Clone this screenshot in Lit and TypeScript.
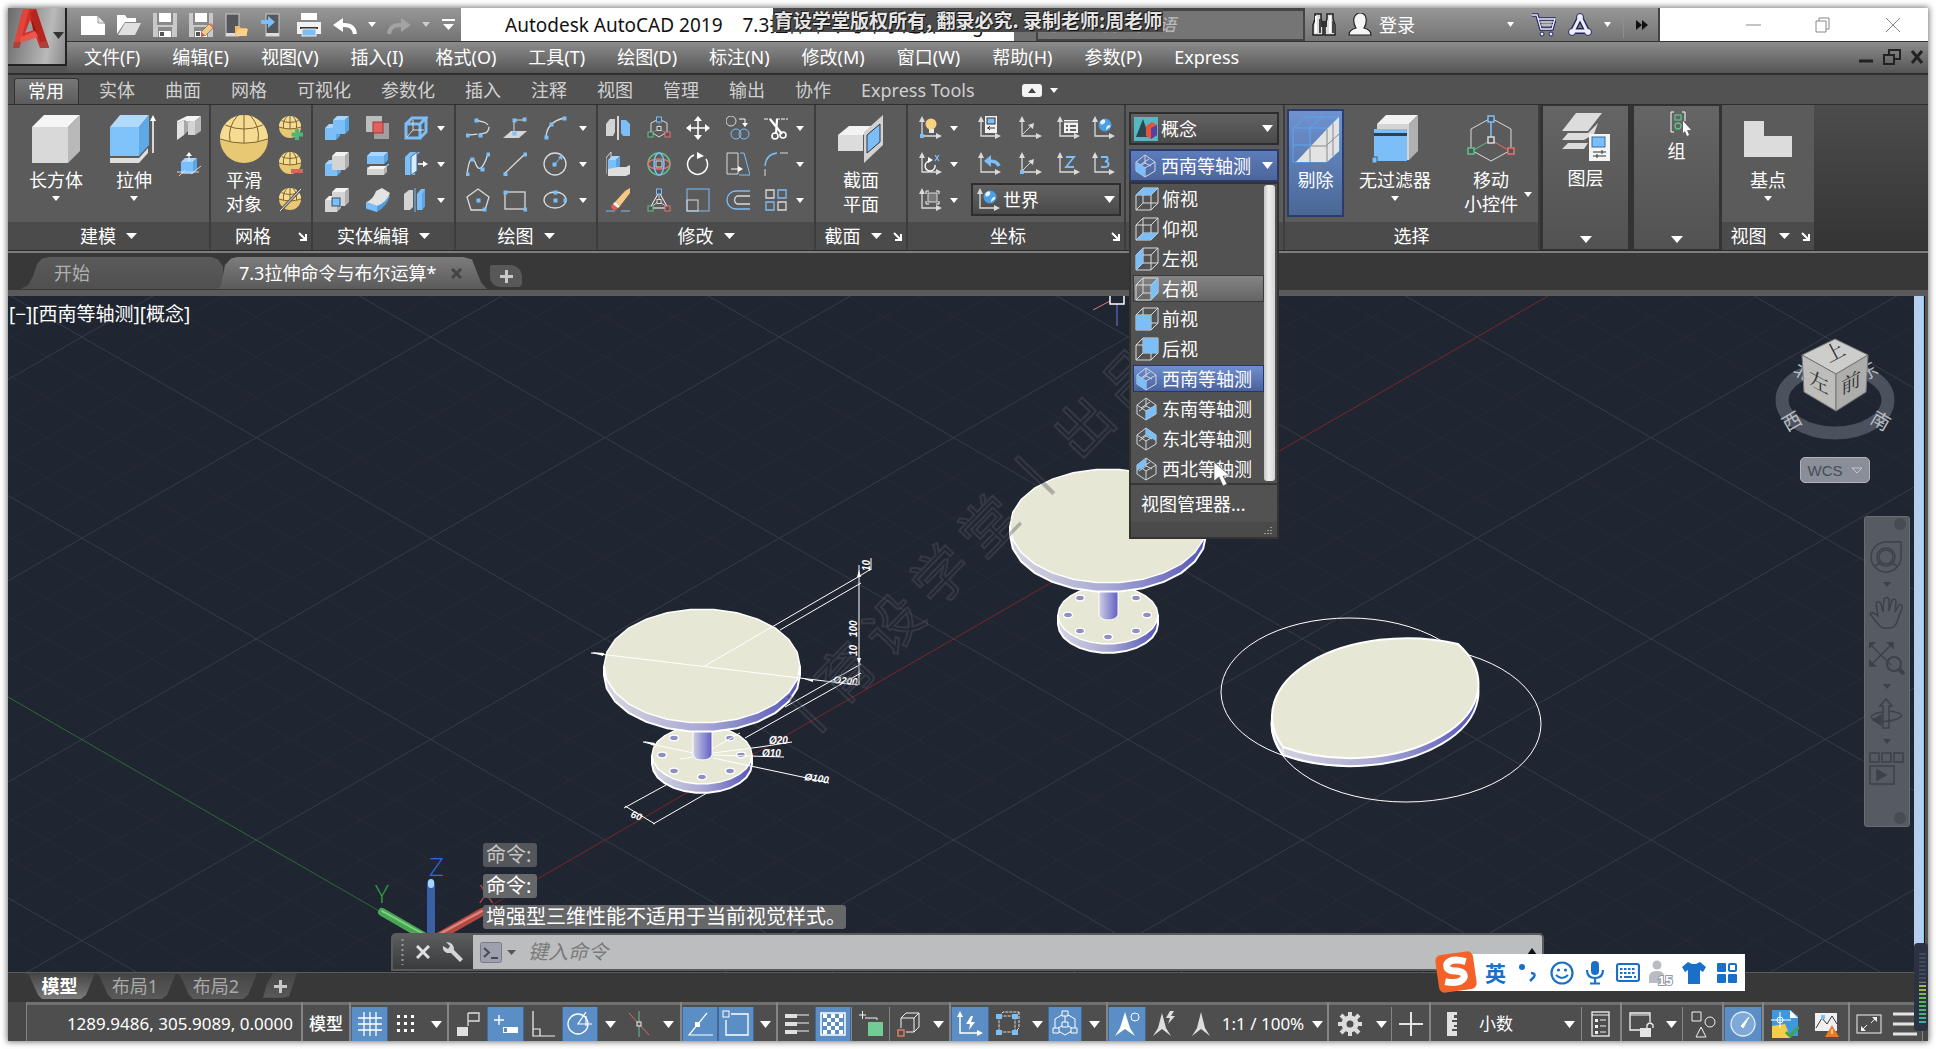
import { LitElement, html, svg, css, nothing, TemplateResult, SVGTemplateResult } from "lit";
import { customElement } from "lit/decorators.js";
import { classMap } from "lit/directives/class-map.js";

const B = "#7cbff8";
const G = "#dadada";

const draw = (w: number, h: number, body: unknown, vb = `0 0 ${w} ${h}`) =>
  html`<svg width=${w} height=${h} viewBox=${vb} fill="none" aria-hidden="true">${body}</svg>`;
const i24 = (body: SVGTemplateResult) => draw(24, 24, body);
const i48 = (body: SVGTemplateResult) => draw(48, 48, body);
const i28 = (body: SVGTemplateResult) => draw(28, 28, body);
const caret = (w = 8, h = 5) => draw(w, h, svg`<path d=${`M0 0H${w}L${w / 2} ${h}Z`} fill="#fff"/>`);
const launcher = draw(9, 9, svg`<path d="M1 1L7 7M8 2V8H2" stroke="#fff" stroke-width="2"/>`);

/* ---------- shared drawing parts ---------- */
const dot = (x: number, y: number) => svg`<rect x=${x - 1.5} y=${y - 1.5} width="4" height="4" fill=${B}/>`;
const block = (x: number, y: number, w: number, h: number, d: number, f: string, t: string, r: string) => svg`
  <path d=${`M${x} ${y + d}h${w}v${h}h${-w}Z`} fill=${f}/>
  <path d=${`M${x} ${y + d}l${d} ${-d}h${w}l${-d} ${d}Z`} fill=${t}/>
  <path d=${`M${x + w} ${y + d}l${d} ${-d}v${h}l${-d} ${d}Z`} fill=${r}/>`;
const blueBlock = (x: number, y: number, w: number, h: number, d: number) => block(x, y, w, h, d, B, "#a8d6ff", "#5aa5e6");
const greyBlock = (x: number, y: number, w: number, h: number, d: number) => block(x, y, w, h, d, "#d4d4d4", "#f2f2f2", "#b0b0b0");
const egg = (r: number) => svg`
  <ellipse cx=${r} cy=${r} rx=${r} ry=${r} fill="#e8c873"/>
  <path d=${`M0 ${r}A${r} ${r} 0 0 1 ${2 * r} ${r}Q${r} ${r * 1.35} 0 ${r}Z`} fill="#f6dc92"/>
  <path d=${`M0 ${r}Q${r} ${r * 1.35} ${2 * r} ${r}M${r * 0.22} ${r * 0.42}Q${r} ${r * 0.75} ${r * 1.78} ${r * 0.42}M${r} 0V${r * 1.17}M${r * 0.75} 0Q${r * 0.3} ${r * 0.5} ${r * 0.42} ${r * 1.1}M${r * 1.25} 0Q${r * 1.7} ${r * 0.5} ${r * 1.58} ${r * 1.1}`} stroke="#7d6530" stroke-width="1"/>`;
const axes = svg`<path d="M4 5V20H19" stroke=${G} stroke-width="1.3"/><path d="M4 0L7 6H1ZM24 20L18 17V23Z" fill=${G}/>`;
const globe = (x: number, y: number) => svg`<circle cx=${x} cy=${y} r="6.5" fill="#4d9fe4"/><path d=${`M${x - 5} ${y - 3}q3-4 5-2q1 3-2 4q-2 2-3-2M${x + 1} ${y + 5}q0-4 3-5q2 0 1 2z`} fill="#e8f4ff"/>`;
const hex = svg`<path d="M12 3L20 7V16L12 21L4 16V7Z" stroke=${G}/>`;

const small: Record<string, SVGTemplateResult> = {
  polysolid: svg`<path d="M0 7L7 4V19L0 24Z" fill="#e2e2e2"/><path d="M7 4L11 6V15L7 19Z" fill="#a9a9a9"/><path d="M11 6L13 5H18V19H11Z" fill="#d4d4d4"/><path d="M0 7V5L10 0H24L18 5H12L11 6L7 4Z" fill="#f4f4f4"/><path d="M18 5L24 0V15L18 19Z" fill="#b8b8b8"/>`,
  presspull: svg`${blueBlock(4, 6, 12, 12, 4)}<path d="M12 9V2" stroke="#fff"/><path d="M12 0L15 4H9Z" fill="#fff"/><path d="M0 20H22M2 24L8 18M14 22L24 14" stroke=${G}/>`,
  eggplus: svg`${egg(11)}<path d="M18 13V24M12.500 18.500H24" stroke="#4fb878" stroke-width="4"/>`,
  eggminus: svg`${egg(11)}<path d="M12 19H24" stroke="#e0605e" stroke-width="4"/>`,
  eggline: svg`${egg(11)}<path d="M1 23L22 1" stroke="#555" stroke-width="3"/><path d="M1 23L22 1" stroke="#eee"/>`,
  union: svg`${blueBlock(0, 8, 11, 12, 4)}${blueBlock(8, 0, 12, 14, 4)}`,
  intersectRed: svg`<rect x="0" y="0" width="16" height="16" fill="#bdbdbd"/><rect x="8" y="7" width="15" height="16" fill="#a0a0a0"/><rect x="7" y="6" width="10" height="11" fill="#e5605c" stroke="#943a38"/>`,
  wirebox: svg`<path d="M2 8H16V22H2ZM2 8L8 2H22L16 8M22 2V16L16 22" stroke=${B} stroke-width="3"/><path d="M9 4V14L3 21M9 14H20" stroke=${G}/>`,
  subtract: svg`${blueBlock(0, 8, 12, 12, 4)}${greyBlock(7, 0, 13, 14, 4)}`,
  slice: svg`${blueBlock(1, 0, 17, 8, 4)}<path d="M1 16H18L23 12" stroke=${B} stroke-width="1.500"/>${greyBlock(1, 14, 17, 6, 3)}`,
  thicken: svg`<path d="M1 5L6 0H16L11 5V23H1Z" fill=${B}/><path d="M7 5L13 0V19L7 23Z" fill="#d8ecff" stroke="#4a6f92"/><path d="M14 12H20" stroke="#fff" stroke-width="1.500"/><path d="M24 12L19 9V15Z" fill="#fff"/>`,
  intersect: svg`${greyBlock(0, 8, 12, 12, 4)}${greyBlock(7, 0, 13, 14, 4)}<rect x="7" y="10" width="8" height="8" fill=${B} stroke="#32536e"/>`,
  fillet: svg`<path d="M0 15Q7 14 11 4L24 8Q21 18 11 24L0 21Z" fill="#4f9ee0"/><path d="M0 14Q7 12 10 3L16 0L24 5Q21 14 11 18Z" fill="#e3e3e3"/><path d="M0 14L11 18V24L0 20Z" fill=${B}/>`,
  separate: svg`<path d="M0 6L5 2H9V19L6 22H0Z" fill="#d4d4d4"/><path d="M13 6L17 1H21V18L18 22H13Z" fill=${B}/><path d="M18 6L21 1V18L18 22Z" fill="#5aa5e6"/><path d="M11 0V24" stroke=${B}/>`,
  pline: svg`<path d="M9 4L18 6Q26 10 21 16Q19 18 1 19" stroke=${G} stroke-width="1.300" stroke-dasharray="14 2"/>${dot(10, 4)}${dot(1, 19)}${dot(14, 19)}`,
  spiral: svg`<path d="M0 22L8 15H24L16 22Z" fill="#d6d6d6"/><path d="M11 19V4H21" stroke=${G}/>${dot(11, 4)}${dot(21, 3)}${dot(11, 17)}`,
  arc: svg`<path d="M3 21Q4 6 21 2" stroke=${G} stroke-width="1.300"/>${dot(3, 21)}${dot(8, 8)}${dot(21, 2)}`,
  spline: svg`<path d="M1 22Q4 0 9 10Q14 26 22 2" stroke=${G} stroke-width="1.300"/>${dot(1, 22)}${dot(6, 7)}${dot(16, 17)}${dot(22, 2)}`,
  line: svg`<path d="M1 22L22 2" stroke=${G} stroke-width="1.300"/>${dot(2, 22)}${dot(22, 2)}`,
  circle: svg`<circle cx="12" cy="12" r="11" stroke=${G} stroke-width="1.300"/><path d="M12 12L18 5" stroke=${B}/><path d="M20 3L19 8L15 5Z" fill=${B}/>${dot(11, 12)}`,
  polygon: svg`<path d="M12 1L23 9L19 22H5L1 9Z" stroke=${G} stroke-width="1.300"/>${dot(12, 12)}${dot(18, 21)}`,
  rect: svg`<rect x="2" y="4" width="20" height="17" stroke=${G} stroke-width="1.300"/>${dot(2, 4)}${dot(22, 21)}`,
  ellipse: svg`<ellipse cx="12" cy="12" rx="11" ry="8" stroke=${G} stroke-width="1.300"/>${dot(12, 12)}${dot(12, 4)}${dot(22, 12)}`,
  mirror: svg`<path d="M0 8L4 3H9V16L7 20H0Z" fill="#d4d4d4"/><path d="M15 4H20L24 8V20H17L15 17Z" fill=${B}/><path d="M12 0V24" stroke="#fff" stroke-width="1.500"/>`,
  gizmo: svg`${hex}<path d="M12 3V12L4 18M12 12L20 18" stroke="#888"/><rect x="9.500" y="1" width="5" height="5" fill="#555" stroke=${B}/><rect x="1" y="16" width="5" height="5" fill="#555" stroke="#5dc389"/><rect x="18" y="16" width="5" height="5" fill="#555" stroke="#ec7070"/><rect x="10" y="10.500" width="4" height="4" fill="#555" stroke=${G}/>`,
  move: svg`<path d="M12 3V21M3 12H21" stroke="#fff" stroke-width="1.600"/><path d="M12 0L16 5H8ZM12 24L8 19H16ZM0 12L5 8V16ZM24 12L19 16V8Z" fill="#fff"/>`,
  copy: svg`<circle cx="5" cy="5" r="5" stroke=${G}/><path d="M13 3H19V8" stroke="#fff"/><path d="M19 11L16 7H22Z" fill="#fff"/><circle cx="10" cy="18" r="5" stroke=${B}/><circle cx="18" cy="18" r="5" stroke=${B}/>`,
  trim: svg`<path d="M0 3H6M12 3H24" stroke="#fff" stroke-dasharray="4 1"/><path d="M6 3L18 18M13 3L12 18" stroke="#fff" stroke-width="2.200"/><circle cx="11" cy="20" r="3" stroke="#fff" stroke-width="1.600"/><circle cx="19" cy="19" r="3" stroke="#fff" stroke-width="1.600"/>`,
  align3d: svg`<path d="M0 22V6L5 0V18" stroke=${G}/>${blueBlock(2, 4, 8, 10, 4)}<path d="M2 17L12 15H20L24 13V22L20 24H2Z" fill="#dedede"/>`,
  rotate3d: svg`<circle cx="12" cy="12" r="11" stroke="#5dc389" stroke-width="1.500"/><ellipse cx="12" cy="12" rx="11" ry="5" stroke="#ec7070" stroke-width="1.300"/><ellipse cx="12" cy="12" rx="5" ry="11" stroke=${B} stroke-width="1.500"/><rect x="9" y="9" width="6" height="6" fill="#555" stroke=${G}/>`,
  rotate: svg`<path d="M8 3A10 10 0 1 0 20 7" stroke="#fff" stroke-width="1.500"/><path d="M18 4L11 0V7Z" fill="#fff"/>`,
  stretch: svg`<path d="M1 1H12V22H1Z" stroke=${G}/><path d="M14 1H18L24 23H13" stroke=${B}/><path d="M5 17H14" stroke="#fff"/><path d="M17 17L12 14V20Z" fill="#fff"/>`,
  filletLine: svg`<path d="M1 14Q2 2 13 1" stroke=${B} stroke-width="1.300"/><path d="M16 1H24M1 17V24" stroke=${G}/>`,
  erase: svg`<path d="M0 23H9M15 23H24" stroke=${B}/><path d="M9 14L19 3L24 0V5L14 18Z" fill="#f5c983"/><path d="M9 14L14 18L10 22Q5 22 5 18Z" fill="#e65b55"/><path d="M9 14L14 18L12 20L7 16Z" fill="#fff"/>`,
  scale3d: svg`<path d="M12 4L3 20H21Z" stroke="#fff"/><path d="M12 13L3 20M12 13L21 20M12 4V13" stroke="#ccc"/><rect x="9.500" y="1" width="5" height="5" fill="#555" stroke=${B}/><rect x="1" y="18" width="5" height="5" fill="#555" stroke="#5dc389"/><rect x="18" y="18" width="5" height="5" fill="#555" stroke="#ec7070"/><rect x="10" y="11.500" width="4" height="4" fill="#555" stroke=${G}/>`,
  scale: svg`<rect x="1" y="1" width="22" height="22" stroke=${B}/><rect x="1" y="12" width="11" height="11" stroke=${G}/>`,
  offset: svg`<path d="M24 3H10A9 9 0 0 0 10 21H24" stroke=${B} stroke-width="1.300"/><path d="M24 8H11A4.500 4.500 0 0 0 11 16H24" stroke=${G} stroke-width="1.300"/>`,
  array: svg`<path d="M2 2H10V10H2ZM14 14H22V22H14Z" stroke=${G} stroke-width="1.300"/><path d="M14 2H22V10H14ZM2 14H10V22H2Z" stroke=${B} stroke-width="1.300"/>`,
  ucsBulb: svg`${axes}<circle cx="13" cy="8" r="5.500" fill="#f8d27f"/><rect x="11" y="13" width="5" height="4" fill="#e8e8e8"/><rect x="2" y="18" width="4" height="4" fill=${B}/>`,
  ucsNamed: svg`${axes}<rect x="8" y="0" width="12" height="17" fill="#f2f2f2"/><rect x="10" y="2" width="8" height="6" fill=${B} stroke="#333"/><path d="M10 12H18M13 10L11 12L13 14" stroke="#333"/>`,
  ucsOrigin: svg`${axes}<path d="M5 18L13 10" stroke=${G}/><path d="M16 7L15 13L10 9Z" fill=${G}/>`,
  ucsView: svg`${axes}<rect x="8" y="4" width="14" height="13" fill="#f2f2f2"/><path d="M8 6H22" stroke="#999" stroke-width="2"/><path d="M10 10H12M14 10H20M10 14H12M14 14H20" stroke="#333" stroke-width="1.500"/>`,
  ucsWorld: svg`${axes}${globe(14, 9)}`,
  ucsX: svg`${axes}<path d="M12 9A5 5 0 1 0 17 13" stroke="#fff" stroke-width="1.400"/><path d="M15 8L10 5V11Z" fill="#fff"/><path d="M17 3L21 9M21 3L17 9" stroke=${B} stroke-width="1.300"/>`,
  ucsPrev: svg`${axes}<path d="M22 14Q20 9 13 9" stroke=${B} stroke-width="3.500"/><path d="M7 9L14 3V15Z" fill=${B}/>`,
  ucsZaxis: svg`${axes}<path d="M5 18L13 10" stroke=${G}/><path d="M16 7L15 13L10 9Z" fill=${G}/><rect x="2" y="18" width="4" height="4" fill=${B}/>`,
  ucsZ: svg`${axes}<path d="M10 5H18L10 15H18" stroke=${B} stroke-width="1.800"/>`,
  ucs3: svg`${axes}<path d="M10 5H16Q18 9 14 9.500Q19 10 17 14Q14 16 10 14.500" stroke=${B} stroke-width="2"/>`,
  ucsFace: svg`${axes}<rect x="10" y="5" width="9" height="9" fill="#7a7a7a" stroke=${G}/><path d="M8 6V3H11M18 3H21V6M21 13V16H18M11 16H8V13" stroke="#fff"/>`,
  concept: svg`<rect width="24" height="24" fill="#55b9c4"/><path d="M9 2L15 20H2Z" fill="#2d4650"/><path d="M12 9L18 5L23 8V18L17 22L12 19Z" fill="#e2543c"/><path d="M17 11L23 8V18L17 22Z" fill="#5a3fa0"/>`,
};

const cubeFaces: Record<string, string> = {
  top: "M1 8L8 1H23L16 8Z", bottom: "M1 23L8 16H23L16 23Z", left: "M1 8L8 1V16L1 23Z",
  right: "M16 8L23 1V16L16 23Z", front: "M1 8H16V23H1Z", back: "M8 1H23V16H8Z",
  sw: "M2 8L11 14V23L2 17Z", se: "M11 14L21 8V17L11 23Z", ne: "M11 1L21 8V14L11 8Z", nw: "M2 8L11 1V8L2 14Z",
};
const viewIcon = (k: string) => i24(k.length > 2
  ? svg`<path d="M1 8H16V23H1ZM1 8L8 1H23L16 8M23 1V16L16 23M8 1V16H23M8 16L1 23" stroke="#dcdcdc"/><path d=${cubeFaces[k]} fill=${B}/>`
  : svg`<path d="M11 1L21 8V17L11 23L2 17V8ZM2 8L11 14L21 8M11 14V23M6 11L15 5M11 1V9L17 12M11 9L4 14" stroke="#cfd6e0"/><path d=${cubeFaces[k]} fill=${B}/>`);

const big: Record<string, SVGTemplateResult> = {
  box: svg`<path d="M0 12H36V48H0Z" fill="#d9d9d9"/><path d="M0 12L12 0H48L36 12Z" fill="#f6f6f6"/><path d="M36 12L48 0V36L36 48Z" fill="#b9b9b9"/>`,
  extrude: svg`<path d="M0 43H29L38 33V38L29 48H0Z" fill="#dedede"/><path d="M0 12H29V41H0Z" fill="#80c2fa"/><path d="M0 12L10 0H39L29 12Z" fill="#b0dbff"/><path d="M29 12L39 0V30L29 41Z" fill="#5ea8e6"/><path d="M43 38V5" stroke="#fff" stroke-width="1.500"/><path d="M43 0L46 6H40Z" fill="#fff"/>`,
  egg: egg(24),
  section: svg`<path d="M1 20H26V36H1Z" fill="#dcdcdc"/><path d="M1 20L12 11H36L26 20Z" fill="#f3f3f3"/><path d="M27 17L46 0V30L27 48Z" fill="#d2d2d2"/><path d="M30 20L43 9V27L30 38Z" fill=${B} stroke="#333"/>`,
  cull: svg`<path d="M1 13H35V47H1ZM1 13L14 2H47L35 13M47 2V36L35 47M18 13V47M1 30H35M41 8V42M18 13L30 2M35 30L47 19" stroke="#59a7ee"/><path d="M4 47L35 14L47 2V36L35 47Z" fill="#e3e3e3"/><path d="M18 32V47M18 31H35M35 14V47M35 30L47 19M41 8V41" stroke="#8a8a8a"/>`,
  nofilter: svg`${greyBlock(6, 0, 32, 36, 9)}<path d="M3 14H36V46H3Z" fill=${B}/><path d="M3 18H36V21H3Z" fill="#2e3f50"/><rect x="1" y="42" width="5" height="6" fill=${B} stroke="#555"/>`,
  gizmo: svg`<path d="M24 3L44 14V35L24 46L4 35V14Z" stroke=${G}/><path d="M24 6V25" stroke=${B} stroke-width="1.500"/><path d="M24 25L5 36" stroke="#5dc389"/><path d="M24 25L43 36" stroke="#ec7070"/><rect x="21" y="1" width="6" height="6" fill="#555" stroke=${B} stroke-width="1.500"/><rect x="1" y="33" width="6" height="6" fill="#555" stroke="#5dc389" stroke-width="1.500"/><rect x="41" y="33" width="6" height="6" fill="#555" stroke="#ec7070" stroke-width="1.500"/><rect x="21" y="22" width="6" height="6" fill="#555" stroke=${G} stroke-width="1.500"/>`,
  layers: svg`<path d="M14 0H40L26 18H0ZM6 20H26L36 10L32 21L22 27H0ZM6 30H26L22 36H0Z" fill="#dcdcdc"/><rect x="27" y="21" width="21" height="27" fill="#f4f4f4"/><rect x="30" y="24" width="13" height="10" fill=${B} stroke="#3b6d9c"/><path d="M31 39H44M31 43H44M40 37V41M35 41V45" stroke="#333"/>`,
  base: svg`<path d="M0 6H20V21H48V42H0Z" fill="#dcdcdc"/>`,
  group: svg`<path d="M21 1H18V21H21M29 1H32V10" stroke="#fff"/><rect x="22" y="4" width="6" height="5" stroke="#5dc389" stroke-width="1.300"/><circle cx="25" cy="15" r="3" stroke="#5dc389" stroke-width="1.300"/><path d="M30 10L38 19L34 19L36 24L34 25L32 20L30 22Z" fill="#fff"/>`,
};

const floppy = svg`<path d="M0 0H24V24H0Z" fill="#c9c9c9"/><path d="M4 0H20V12H4ZM5 14H19V24H5Z" fill="#8a8a8a"/><path d="M6 0H18V9H6Z" fill="#fff"/><path d="M6 18H18V24H6Z" fill="#fff"/><rect x="7" y="19" width="4" height="4" fill="#555"/>`;
const qat: SVGTemplateResult[] = [
  svg`<path d="M0 3H16L24 11V22H0Z" fill="#fff"/><path d="M17 3V10H24Z" fill="#e9e9e9" stroke="#999"/>`,
  svg`<path d="M0 2H8L10 5H19V9H8L0 21Z" fill="#fff"/><path d="M8 10H24L18 22H1Z" fill="#e0e0e0"/>`,
  floppy,
  svg`${floppy}<path d="M12 19L20 11L24 15L16 23Z" fill="#f5c983" stroke="#555" stroke-width=".6"/><path d="M12 19L16 23L12 24Z" fill="#d9534f"/><path d="M20 11L22 10L25 13L24 15Z" fill="#e9736c"/>`,
  svg`<rect x="1" y="1" width="13" height="22" fill="#54585c" stroke="#c9c9c9"/><path d="M1 20H14V23H1Z" fill="#dcdcdc"/><path d="M10 13H14L16 15H22V23H10Z" fill="#f0b95c"/><path d="M13 16H23L21 23H10Z" fill="#fad28b"/>`,
  svg`<rect x="5" y="1" width="13" height="22" fill="#54585c" stroke="#c9c9c9"/><path d="M5 20H18V23H5Z" fill="#dcdcdc"/><path d="M0 7H7V3L14 9L7 15V11H0Z" fill=${B}/>`,
  svg`<rect x="4" y="0" width="16" height="7" fill="#fff"/><path d="M0 9H24V21H0Z" fill="#f2f2f2"/><path d="M3 15H21" stroke="#333" stroke-width="2"/><rect x="5" y="16" width="14" height="7" fill=${B} stroke="#eee"/>`,
];
const undo = (c: string, flip = false) => svg`<g transform=${flip ? "translate(24 0) scale(-1 1)" : ""}><path d="M22 21Q21 11 9 12" stroke=${c} stroke-width="4"/><path d="M0 12L10 5V19Z" fill=${c}/></g>`;

/* ---------- status bar ---------- */
type Cell = { w: number; label: string; body?: unknown; on?: boolean; caret?: boolean; sep?: boolean };
const S = "#f2f2f2";
const C = (w = 24): Cell => ({ w, label: "更多选项", caret: true });
const groups: Cell[][] = [
  [
    { w: 37, label: "栅格", on: true, body: svg`<path d="M8 2V26M14 2V26M20 2V26M2 8H26M2 14H26M2 20H26" stroke="#fff" stroke-width="1.300"/>` },
    { w: 37, label: "捕捉", body: svg`${[4, 11, 18].map(x => [5, 12, 19].map(y => svg`<rect x=${x} y=${y} width="3" height="3" fill="#fff"/>`))}` },
    C(22),
  ],
  [
    { w: 38, label: "推断约束", body: svg`<path d="M3 17H14V26H3Z" fill="#e0e0e0"/><path d="M14 3H25V11H14M14 3V16" stroke="#e0e0e0" stroke-width="1.300"/>` },
    { w: 37, label: "动态输入", on: true, body: svg`<path d="M2 10H12M7 5V15" stroke="#fff" stroke-width="1.400"/><path d="M11 17H26V23H11Z" fill="#fff"/><rect x="12" y="18" width="3" height="4" fill="#5b8ec4"/>` },
    { w: 38, label: "正交", body: svg`<path d="M4 1V26H26M4 19H11V26" stroke=${S} stroke-width="1.200"/>` },
    { w: 36, label: "极轴追踪", on: true, body: svg`<circle cx="12" cy="14" r="10" stroke="#fff" stroke-width="1.300"/><path d="M20 2L12 14H26M20 6V16" stroke="#fff" stroke-width="1.200"/>` },
    C(),
    { w: 34, label: "等轴测草图", body: svg`<path d="M4 3L24 25" stroke="#dd6a6a"/><path d="M14 1V27" stroke="#6abf90"/><rect x="12" y="12" width="4" height="4" fill="#555" stroke=${S}/>` },
    C(),
  ],
  [
    { w: 36, label: "对象追踪", on: true, body: svg`<path d="M21 3L3 25H27" stroke="#fff" stroke-width="1.200"/><rect x="9" y="12" width="5" height="5" fill="#fff"/>` },
    { w: 36, label: "对象捕捉", on: true, body: svg`<path d="M9 4H26V25H4V10" stroke="#fff" stroke-width="1.300"/><rect x="1" y="1" width="6" height="6" stroke="#fff"/>` },
    C(22),
  ],
  [
    { w: 37, label: "线宽", body: svg`<path d="M2 5H26M14 13H26M14 21H26" stroke=${S}/><path d="M2 6H14M2 14H14M2 22H14" stroke="#e0e0e0" stroke-width="4"/>` },
    { w: 36, label: "透明度", on: true, body: svg`<rect x="2" y="3" width="24" height="22" stroke="#fff" stroke-width="1.500"/>${[0, 1, 2, 3, 4].map(r => [0, 1, 2, 3, 4].filter(c => (r + c) % 2 === 0).map(c => svg`<rect x=${4 + c * 4} y=${4 + r * 4} width="4" height="4" fill="#fff"/>`))}` },
    { w: 38, label: "选择循环", sep: true, body: svg`<path d="M2 5H9M5.500 1V9M8 8H20V10" stroke=${S}/><rect x="11" y="12" width="15" height="14" fill="#72cc96"/>` },
    { w: 38, label: "三维对象捕捉", sep: true, body: svg`<path d="M6 8L11 3H24L19 8ZM6 8V18M19 8V22H11M24 3V17L19 22" stroke=${S}/><rect x="3" y="20" width="6" height="6" stroke="#ee8660" stroke-width="1.300"/>` },
    C(22),
  ],
  [
    { w: 38, label: "动态 UCS", on: true, body: svg`<path d="M4 6V23H22" stroke="#fff" stroke-width="1.500"/><path d="M4 1L7 7H1ZM27 23L21 20V26Z" fill="#fff"/><path d="M15 6L10 14H14L13 20L19 12H15L17 6Z" fill="#fff"/>` },
    { w: 37, label: "选择过滤", body: svg`<path d="M5 6L9 2H25L22 6H5V22H21V6M25 2V18L21 22" stroke="#ddd" stroke-dasharray="3 1"/><path d="M2 4H8V9H2ZM18 4H24V9H18ZM2 20H8V25H2ZM18 20H24V25H18Z" fill=${B}/>` },
    C(22),
    { w: 34, label: "小控件", on: true, body: svg`<path d="M14 3L24 9V19L14 25L4 19V9ZM14 3V14L4 20M14 14L24 20" stroke="#fff"/><path d="M11 1H17V6H11ZM2 18H8V23H2ZM20 18H26V23H20ZM11 12H17V17H11Z" fill="#5b8ec4" stroke="#fff"/>` },
    C(),
  ],
  [
    { w: 38, label: "注释可见性", on: true, body: svg`<path d="M12 2L17 18L22 26L12 19L2 26L7 18Z" fill="#fff"/><circle cx="22" cy="7" r="4" stroke="#fff"/>` },
    { w: 37, label: "自动缩放", body: svg`<path d="M11 3L15 18L20 26L11 19L2 26L7 18Z" fill="#dedede"/><path d="M19 1L15 8H19L17 14L24 6H20L23 1Z" fill="#dedede"/>` },
    { w: 36, label: "注释比例图标", body: svg`<path d="M14 2L18 18L23 26L14 19L5 26L10 18Z" fill="#dedede"/>` },
    { w: 88, label: "注释比例", body: "1:1 / 100%" },
    C(20),
  ],
  [
    { w: 42, label: "切换工作空间", body: svg`<circle cx="14" cy="14" r="6" stroke="#dcdcdc" stroke-width="5"/><path d="M14 2V7M14 21V26M2 14H7M21 14H26M5 5L9 9M19 19L23 23M23 5L19 9M9 19L5 23" stroke="#dcdcdc" stroke-width="4"/>` },
    C(20),
    { w: 38, label: "注释监视器", sep: true, body: svg`<path d="M14 2V26M2 14H26" stroke="#e4e4e4" stroke-width="2"/>` },
  ],
  [
    { w: 42, label: "单位图标", body: svg`<path d="M9 2H19V5H16V8H19V10H14V12H19V15H16V17H19V19H14V21H19V26H9Z" fill="#e0e0e0"/>` },
    { w: 108, label: "单位", body: "select" },
    { w: 39, label: "快捷特性", sep: true, body: svg`<rect x="5" y="2" width="17" height="24" stroke=${S} stroke-width="1.300"/><path d="M5 5H22" stroke=${S}/><path d="M8 9H11V12H8ZM8 15H11V18H8ZM8 21H11V24H8Z" fill=${S}/><path d="M13 10H19M13 16H19M13 22H19" stroke=${S}/>` },
  ],
  [
    { w: 38, label: "锁定用户界面", body: svg`<path d="M15 20H3V3H23V12" stroke=${S} stroke-width="1.300"/><path d="M3 5H23" stroke=${S}/><rect x="13" y="18" width="11" height="9" fill="#e4e4e4"/><path d="M20 18V15Q23 11 26 15V18" stroke=${S} stroke-width="1.300"/>` },
    C(22),
    { w: 40, label: "隔离对象", sep: true, body: svg`<path d="M3 2H12V11H3ZM12 17L17 27H7Z" stroke=${S}/><circle cx="21" cy="12" r="5" stroke=${S}/>` },
  ],
  [{ w: 38, label: "硬件加速", on: true, body: svg`<circle cx="14" cy="14" r="12" fill="#7fa9d6" stroke="#dfeaf6" stroke-width="1.300"/><path d="M12 16L20 7L14 18Z" fill="#fff" stroke="#fff"/>` }],
  [
    { w: 42, label: "图形保存", body: svg`<path d="M1 0H19L27 6V26H1Z" fill="#3f97de"/><path d="M19 0V8H27Z" fill="#fff"/><path d="M1 16L14 14L20 28H1Z" fill="#f7cd45"/><path d="M0 10H20M9 2V18" stroke="#fff"/><circle cx="9" cy="10" r="3" stroke="#fff"/><path d="M15 22L19 26L28 17" stroke="#3aa648" stroke-width="3"/>` },
    { w: 42, label: "图形监视", body: svg`<rect x="2" y="3" width="22" height="18" fill="#f0f0f0"/><path d="M3 18L9 8L14 14L19 6L24 14" stroke="#333"/><rect x="8" y="5" width="4" height="4" fill=${B}/><path d="M19 15L26 27H12Z" fill="#ea7a30"/><path d="M19 19V24" stroke="#fff"/>` },
  ],
  [
    { w: 38, label: "全屏显示", body: svg`<rect x="2" y="5" width="24" height="18" stroke=${S}/><path d="M21 8L16 13M7 20L12 15" stroke=${S}/><path d="M22 7H17L22 12ZM6 21H11L6 16Z" fill=${S}/>` },
    { w: 34, label: "自定义", body: svg`<path d="M2 4H26M2 14H26M2 24H26" stroke="#e4e4e4" stroke-width="3"/>` },
  ],
];

/* ---------- model space drawing ---------- */
const K = 0.577;
const OX = 430.6;
const OY = 940.6;
const gridLine = (down: boolean, c: number, color: string) => {
  const y = (x: number) => OY + c + (down ? 1 : -1) * K * (x - OX);
  return svg`<line x1="0" y1=${y(0)} x2="1940" y2=${y(1940)} stroke=${color}/>`;
};
const gridLines = () => {
  const out: SVGTemplateResult[] = [];
  for (let i = -42; i <= 42; i++) {
    if (i % 5 === 0) continue;
    out.push(gridLine(true, i * 40.24, "#262c36"), gridLine(false, i * 40.24, "#262c36"));
  }
  for (let i = -8; i <= 8; i++) {
    if (i === 0) continue;
    out.push(gridLine(true, i * 201.2, "#363d48"), gridLine(false, i * 201.2, "#363d48"));
  }
  return out;
};
const ring = (cx: number, cy: number, rx: number, ry: number, n = 26) =>
  Array.from({ length: n }, (_, k) => {
    const a = (k / n) * Math.PI * 2;
    return `${(cx + rx * Math.cos(a)).toFixed(1)},${(cy + ry * Math.sin(a)).toFixed(1)}`;
  }).join(" ");
const disc = (cx: number, cy: number, rx: number, ry: number, h: number) => svg`
  <polygon points=${ring(cx, cy + h, rx, ry)} fill="url(#rim)" stroke="#fff" stroke-width="2"/>
  <rect x=${cx - rx} y=${cy} width=${2 * rx} height=${h} fill="url(#rim)"/>
  <path d=${`M${cx - rx} ${cy}v${h}M${cx + rx} ${cy}v${h}`} stroke="#fff" stroke-width="2"/>
  <polygon points=${ring(cx, cy, rx, ry)} fill="#e6e7d5" stroke="#fff" stroke-width="1.500"/>`;
const holes = [[674, 738], [730, 738], [662, 755], [741, 755], [674, 771], [730, 771], [702, 777]];
const table = svg`
  ${disc(702, 755, 50, 29, 9)}
  ${holes.map(([x, y]) => svg`<ellipse cx=${x} cy=${y} rx="4.500" ry="2.800" fill="#8f8fc4" stroke="#fff" stroke-width="1.300"/>`)}
  <path d="M693 725V755Q695 760 702 760Q710 760 712 755V725Z" fill="url(#post)" stroke="#fff"/>
  ${disc(702, 666, 98, 57, 9)}`;

const scene = html`<svg class="scene" viewBox="8 296 1906 676" preserveAspectRatio="xMinYMin slice" fill="none" role="img" aria-label="模型空间">
  <defs>
    <linearGradient id="rim"><stop offset="0" stop-color="#d6d6e0"/><stop offset=".5" stop-color="#a9a9d4"/><stop offset="1" stop-color="#5454b8"/></linearGradient>
    <linearGradient id="post"><stop offset="0" stop-color="#cfcfe4"/><stop offset="1" stop-color="#5f5fc4"/></linearGradient>
  </defs>
  ${gridLines()}
  <path d=${`M${OX} ${OY}L1548 296`} stroke="#7c2529"/>
  <path d=${`M8 697L${OX} ${OY}`} stroke="#2c6b35"/>
  <ellipse cx="1349" cy="692" rx="128" ry="74" stroke="#fff"/>
  <ellipse cx="1406" cy="724" rx="135" ry="78" stroke="#fff"/>
  <path d="M1458 652A128 74 0 0 1 1283 755A135 78 0 0 1 1458 652Z" fill="url(#rim)" stroke="#fff" stroke-width="2"/>
  <path d="M1458 644A128 74 0 0 1 1283 747A135 78 0 0 1 1458 644Z" fill="#e6e7d5" stroke="#fff" stroke-width="2"/>
  <path d="M1283 747V755" stroke="#fff"/>
  ${table}
  <g transform="translate(406 -140)">${table}</g>
  <g stroke="#fff">
    <path d="M591 653L858 685M703 667L858 577L871 569M780 630L861 583M859 565V685M871 558V570"/>
    <path d="M785 707L861 664M712 749L740 733M745 738L861 673"/>
    <path d="M713 753L760 747L792 742M713 755L784 757M643 742L693 753M713 758L807 778L829 783M680 759L693 757"/>
    <path d="M666 785L624 808M707 793L653 824M625 806L655 824"/>
  </g>
  <path d="M591 652L604 653L603 656ZM643 741L655 743L654 746ZM801 678L813 680V682ZM859 570L857 577H861ZM859 665L857 658H861Z" fill="#fff"/>
  <g class="dim">
    <text transform="translate(833 683) rotate(5)">Ø200</text>
    <text x="769" y="744">Ø20</text><text x="762" y="757">Ø10</text>
    <text transform="translate(804 780) rotate(8)">Ø100</text>
    <text transform="translate(857 637) rotate(-90)">100</text>
    <text transform="translate(857 656) rotate(-90)">10</text>
    <text transform="translate(870 571) rotate(-90)">10</text>
    <text transform="translate(630 817) rotate(20)">60</text>
  </g>
  <text class="ghost" transform="translate(802 748) rotate(-46)">丨育 设 学 堂 丨 出 品</text>
  <path d="M1093 310L1110 301" stroke="#d9758c"/><path d="M1117 304V326" stroke="#6f74e6"/><path d="M1110 296V304H1124V296" stroke="#fff" stroke-width="1.500"/>
  <g stroke-linecap="round" stroke-width="8">
    <path d="M382 912L427 938" stroke="#4aa653"/><path d="M382 911L427 936" stroke="#7fd183" stroke-width="2"/>
    <path d="M482 912L436 938" stroke="#b34843"/><path d="M482 911L436 936" stroke="#d98983" stroke-width="2"/>
    <path d="M431 884V936" stroke="#3a5fa4"/><path d="M431 882V885" stroke="#a9d3ff" stroke-width="6"/>
  </g>
  <g class="axis"><text x="429" y="876" fill="#2b6ae0">Z</text><text x="375" y="903" fill="#2fa23c">Y</text><text x="479" y="903" fill="#c04449">X</text></g>
</svg>`;

const viewCube = draw(128, 112, svg`
  <ellipse cx="1835" cy="400" rx="53" ry="33" stroke="#4b525d" stroke-width="13"/>
  <g class="compass" fill="#b9bcc1">
    <text transform="translate(1787 432) rotate(-30)">西</text><text transform="translate(1869 422) rotate(30)">南</text>
    <text transform="translate(1792 373) rotate(30)">北</text><text transform="translate(1863 382) rotate(-30)">东</text>
  </g>
  <path d="M1835 339L1868 355L1836 374L1802 355Z" fill="#cdcdcb" stroke="#777"/>
  <path d="M1802 355L1836 374V411L1804 392Z" fill="#bdbdbb" stroke="#777"/>
  <path d="M1868 355L1836 374V411L1866 392Z" fill="#adadab" stroke="#777"/>
  <g class="facetext" fill="#333">
    <text transform="translate(1829 363) rotate(-28)">上</text>
    <text transform="translate(1809 384) skewY(28)">左</text>
    <text transform="translate(1841 395) skewY(-28)">前</text>
  </g>`, "1771 332 128 112");

const navIcons: [string, SVGTemplateResult, boolean][] = [
  ["导航控制盘", svg`<path d="M17 2H32V18A15 15 0 1 1 17 2Z"/><circle cx="17" cy="17" r="9"/><circle cx="17" cy="17" r="7"/><path d="M6 26L11 23M28 26L23 23"/>`, true],
  ["平移", svg`<path d="M12 32Q5 25 1 19Q3 16 9 21L7 8Q10 5 12 9L14 17L15 4Q18 1 20 4V16L23 5Q27 3 27 7L26 17L30 10Q34 9 33 13L28 27Q26 33 20 33H14Z"/>`, false],
  ["范围缩放", svg`<path d="M2 3L22 23M22 3L2 23"/><path d="M0 0H6L0 6ZM24 0H18L24 6ZM0 24V18L6 24Z" fill="#3c4249"/><circle cx="25" cy="22" r="7" stroke-width="2"/><path d="M30 27L35 32" stroke-width="4"/>`, true],
  ["动态观察", svg`<path d="M14 9H11L17 2L23 9H20V31H14Z"/><path d="M13 15Q-2 18 4 22Q14 27 28 22Q40 17 21 14"/><path d="M4 23L12 18V28Z" fill="#3c4249"/>`, true],
  ["ShowMotion", svg`<path d="M1 1H10V10H1ZM13 1H22V10H13ZM25 1H34V10H25ZM1 14H25V32H1Z"/><path d="M8 18L17 23L8 28Z" fill="#3c4249"/>`, false],
];

const imeIcons: [string, unknown][] = [
  ["英", html`<b class="ime-char">英</b>`],
  ["标点", i24(svg`<circle cx="5" cy="6" r="3" fill="#1a6fc9"/><path d="M14 12Q19 12 17 16L13 20" stroke="#1a6fc9" stroke-width="2.500"/>`)],
  ["表情", i24(svg`<circle cx="12" cy="12" r="10.500" stroke="#1a6fc9" stroke-width="2.200"/><circle cx="8.500" cy="9" r="1.600" fill="#1a6fc9"/><circle cx="15.500" cy="9" r="1.600" fill="#1a6fc9"/><path d="M6 14Q12 20 18 14" stroke="#1a6fc9" stroke-width="2"/>`)],
  ["语音", i24(svg`<rect x="8" y="0" width="8" height="14" rx="4" fill="#1a6fc9"/><path d="M4 9Q4 17 12 17Q20 17 20 9M12 17V22M7 22.500H17" stroke="#1a6fc9" stroke-width="2.200"/>`)],
  ["软键盘", i24(svg`<rect x="1" y="3" width="22" height="17" rx="2" stroke="#1a6fc9" stroke-width="2.200"/><path d="M4 8H20M4 12H20" stroke="#1a6fc9" stroke-width="2.200" stroke-dasharray="2.500 1.500"/><path d="M4 16H6M8 16H16M18 16H20" stroke="#1a6fc9" stroke-width="2.200"/>`)],
  ["用户", draw(26, 26, svg`<circle cx="9" cy="5" r="4.500" fill="#b9bcc4"/><path d="M1 23V16Q2 11 9 11Q16 11 16 16V23Z" fill="#b9bcc4"/><text x="10" y="25" class="lv">15</text>`)],
  ["皮肤", i24(svg`<path d="M6 1L10 3H14L18 1L24 6L21 11L18 9V23H6V9L3 11L0 6Z" fill="#1a6fc9"/>`)],
  ["工具箱", i24(svg`<rect x="2" y="2" width="9" height="9" rx="1" fill="#1a6fc9"/><rect x="14" y="3" width="7" height="7" rx="1" stroke="#1a6fc9" stroke-width="2"/><rect x="2" y="13" width="9" height="9" rx="1" fill="#1a6fc9"/><rect x="13" y="13" width="9" height="9" rx="1" fill="#1a6fc9"/>`)],
];

const menus = ["文件(F)", "编辑(E)", "视图(V)", "插入(I)", "格式(O)", "工具(T)", "绘图(D)", "标注(N)", "修改(M)", "窗口(W)", "帮助(H)", "参数(P)", "Express"];
const tabs = ["常用", "实体", "曲面", "网格", "可视化", "参数化", "插入", "注释", "视图", "管理", "输出", "协作", "Express Tools"];
const views: [string, string][] = [["俯视", "top"], ["仰视", "bottom"], ["左视", "left"], ["右视", "right"], ["前视", "front"], ["后视", "back"], ["西南等轴测", "sw"], ["东南等轴测", "se"], ["东北等轴测", "ne"], ["西北等轴测", "nw"]];

@customElement("app-root")
export class AppRoot extends LitElement {
  static styles = css`
    :host { display: block; font: 18px/24px "Noto Sans", "Noto Sans CJK SC", sans-serif; color: #fff; background: #fff; }
    * { box-sizing: border-box; }
    button, select, input { font: inherit; color: inherit; background: none; border: 0; padding: 0; margin: 0; }
    button { display: flex; align-items: center; justify-content: center; }
    a { color: inherit; text-decoration: none; }
    svg { display: block; flex: none; }
    .page { min-height: 100vh; padding: 8px; display: flex; }
    .window { flex: 1; min-width: 0; display: flex; flex-direction: column; background: #383838; box-shadow: 0 0 6px 1px #777; overflow: hidden; }

    .header { display: flex; background: linear-gradient(#555 60px, #525252); border-bottom: 2px solid #2e2e2e; }
    .appbtn { flex: 0 0 59px; height: 58px; background: linear-gradient(100deg, #6a6a6a, #b9b9b9 70%, #8a8a8a); border-right: 2px solid #222; border-bottom: 2px solid #222; gap: 4px; align-items: flex-start; padding: 1px 0 0 2px; }
    .appbtn svg:last-child { margin-top: 23px; }
    .hright { flex: 1; min-width: 0; }
    .titlebar { display: flex; height: 34px; background: #6f6f6f; border-bottom: 1px solid #333; position: relative; }
    .qat { flex: 0 0 393px; display: flex; align-items: center; padding-left: 8px; background: linear-gradient(#979797, #747474); }
    .qat .tool { width: 36px; height: 32px; }
    .qat .mini { width: 18px; height: 32px; }
    .qat .last { width: 26px; }
    .title { flex: 1 1 554px; background: #fff; color: #111; font-size: 19px; padding-left: 44px; display: flex; align-items: center; gap: 20px; white-space: nowrap; overflow: hidden; }
    .search { flex: 0 0 269px; margin-left: 22px; background: #757575; border: 2px solid #444; border-top-width: 3px; padding: 0 2px; font-size: 17px; }
    .search::placeholder { color: #bdbdbd; opacity: 1; font-style: italic; }
    .account { flex: 0 0 355px; display: flex; align-items: center; background: linear-gradient(#979797, #747474); border-right: 2px solid #444; padding-left: 7px; gap: 12px; }
    .account .login { width: 147px; gap: 7px; justify-content: flex-start; }
    .account .first { padding-right: 6px; }
    .account .rule { width: 1px; height: 26px; background: #8d8d8d; }
    .winctl { flex: 0 0 268px; background: #fff; display: flex; justify-content: flex-end; }
    .winctl button { width: 70px; }
    .notice { position: absolute; left: 706px; top: 0; height: 24px; background: #4a4a4a; padding: 0 1px; font: bold 19px/24px "Noto Sans CJK SC", sans-serif; color: #e4e4e4; text-shadow: 1px 1px 0 #111, -1px -1px 0 #222; white-space: nowrap; }
    .menubar { display: flex; gap: 32px; align-items: center; height: 31px; padding: 0 4px 2px 17px; background: linear-gradient(#8c8c8c, #555); white-space: nowrap; }
    .menubar .sp { flex: 1; }
    .mdi { display: flex; gap: 9px; }

    .tabs { display: flex; height: 30px; padding-left: 6px; background: #525252; border-bottom: 1px solid #2e2e2e; color: #d0d0d0; white-space: nowrap; }
    .tabs button { padding: 0 15px 2px; margin-top: 3px; }
    .tabs button.on { color: #fff; background: linear-gradient(#777, #5c5c5c); border: 1px solid #333; border-bottom: 0; padding: 0 14px 2px 13px; margin-right: 5px; border-radius: 3px 3px 0 0; }
    .tabs .mini { padding: 0 0 2px 32px; gap: 8px; }

    .ribbon { display: flex; height: 146px; background: linear-gradient(#4c4c4c, #343434); position: relative; z-index: 2; border-bottom: 1px solid #2a2a2a; }
    .panel { display: flex; flex-direction: column; background: #5b5b5b; border-right: 2px solid #3d3d3d; }
    .body { flex: 1; padding-top: 5px; display: flex; }
    .foot { height: 28px; background: #4b4b4b; display: flex; align-items: center; justify-content: center; gap: 10px; position: relative; }
    .foot.more { padding-right: 16px; }
    .foot .la { position: absolute; right: 4px; top: 10px; }
    .bigbtn { flex-direction: column; justify-content: flex-start; line-height: 24px; padding-top: 5px; align-self: stretch; }
    .bigbtn svg:first-child { margin-bottom: 5px; }
    .bigbtn .c { margin-top: 4px; }
    .grid { display: grid; grid-auto-rows: 36px; align-content: start; align-items: center; justify-items: center; }
    .p-model { flex: 0 0 203px; } .p-mesh { flex: 0 0 102px; } .p-solid { flex: 0 0 143px; } .p-draw { flex: 0 0 142px; }
    .p-mod { flex: 0 0 218px; } .p-sec { flex: 0 0 92px; } .p-ucs { flex: 0 0 218px; } .p-view { flex: 0 0 159px; }
    .p-sel { flex: 0 0 255px; } .p-slim { flex: 0 0 91px; } .p-base { flex: 0 0 92px; border-right: 0; }
    .p-model .bigbtn { width: 78px; } .p-model .body { padding-left: 9px; } .p-model .grid { grid-template-columns: 32px; }
    .p-mesh .body { padding-left: 3px; } .p-mesh .bigbtn { width: 60px; } .p-mesh .grid { grid-template-columns: 30px; margin-left: 2px; }
    .p-solid .grid { grid-template-columns: 40px 42px 34px 16px; padding-left: 4px; }
    .p-draw .grid { grid-template-columns: 36px 38px 42px 14px; padding-left: 4px; }
    .p-mod .grid { grid-template-columns: 40px 42px 36px 44px 32px 16px; }
    .p-sec .bigbtn { width: 90px; }
    .p-ucs .g1 { grid-template-columns: 36px 12px; padding-left: 4px; }
    .p-ucs .g2 { grid-template-columns: 40px 42px 34px 36px; grid-auto-rows: 36px; }
    .p-ucs .right { margin-left: 9px; }
    .combo { position: relative; display: flex; align-items: center; height: 33px; width: 150px; padding: 0 4px 0 3px; gap: 3px; background: linear-gradient(#626262, #4a4a4a); border: 2px solid #2e2e2e; }
    .combo select { flex: 1; min-width: 0; appearance: none; height: 29px; outline: 0; }
    .combo > svg:last-of-type { margin-left: -12px; pointer-events: none; }
    .combo.hot { background: linear-gradient(#5d7cba, #4c659c); border-color: #2b3a66; }
    .p-ucs .combo { margin: 1px 0 0 2px; }
    .p-view .body { flex-direction: column; gap: 4px; padding: 7px 0 0 3px; }
    option { background: #555; }
    .drop { position: absolute; left: -2px; top: 31px; width: 150px; background: #525252; border: 2px solid #333; z-index: 5; }
    .list { display: flex; padding: 1px 2px 0; border-bottom: 2px solid #363636; }
    .list ul { list-style: none; margin: 0; padding: 0; flex: 1; }
    .list li { margin-bottom: 3px; }
    .list li:last-child { margin-bottom: 1px; }
    .list li button { width: 100%; height: 27px; justify-content: flex-start; gap: 3px; padding-left: 1px; border: 1px solid transparent; white-space: nowrap; }
    .list li .hover { background: linear-gradient(#848484, #646464); border-color: #3a3a3a; }
    .list li .sel { background: linear-gradient(#6f8fd0, #4a629c); border-color: #26356a; }
    .bar { width: 11px; margin-bottom: 2px; border-radius: 3px; background: linear-gradient(90deg, #c4c4c4, #eee 40%, #d6d6d6); }
    .manager { height: 37px; padding-left: 10px; font-size: 18px; }
    .grip { height: 15px; background: #4a4a4a; display: flex; justify-content: flex-end; align-items: center; padding-right: 4px; }
    .pointer { position: absolute; left: 82px; top: 277px; }
    .p-sel .body { padding: 4px 2px 0 2px; }
    .p-sel .cull { width: 57px; height: 108px; background: linear-gradient(#6f92d0, #4a6795); border: 2px solid #2c3d6b; padding-top: 4px; }
    .p-sel .nf { width: 102px; padding-top: 6px; } .p-sel .gz { width: 90px; padding-top: 6px; position: relative; }
    .gz .side { position: absolute; right: 4px; top: 83px; }
    .p-slim { border: 3px solid #333; border-top-width: 1px; border-bottom-width: 1px; background: linear-gradient(#656565, #525252); }
    .p-slim .bigbtn { width: 100%; padding-top: 7px; } .p-slim .grp svg { margin-bottom: 0; }
    .p-slim .grp { padding-top: 5px; }
    .p-slim .foot { background: none; height: 20px; }
    .p-slim .body { padding-top: 0; }
    .p-base .bigbtn { width: 92px; } .p-base .foot { gap: 12px; }

    .docs { display: flex; height: 39px; padding: 6px 0 1px 12px; background: #383838; border-top: 2px solid #7e7e7e; }
    .doc { height: 32px; background: linear-gradient(#5a5a5a, #505050); color: #b0b0b0; align-self: flex-end;
      clip-path: polygon(0 100%, 8px 88%, 13px 60%, 17px 22%, 22px 5%, 30px 0, calc(100% - 12px) 0, calc(100% - 5px) 8%, 100% 30%, 100% 100%); }
    .d0 { width: 203px; padding-left: 34px; justify-content: flex-start; }
    .d1 { width: 270px; margin-left: -6px; padding-left: 22px; gap: 15px; justify-content: flex-start; color: #fff; background: linear-gradient(#7c7c7c, #5b5b5b);
      clip-path: polygon(0 100%, 4px 88%, 8px 25%, 14px 5%, 20px 0, calc(100% - 24px) 0, calc(100% - 15px) 8%, calc(100% - 6px) 80%, 100% 100%); }
    .add { width: 32px; height: 22px; margin: 6px 0 0 3px; background: #585858; border-radius: 2px 12px 4px 10px; }
    .edge { height: 6px; background: #5b5b5b; }

    .stage { flex: 1; display: flex; min-height: 0; position: relative; }
    .view { flex: 1; position: relative; background: #202631; overflow: hidden; }
    .scene { position: absolute; inset: 0; width: 100%; height: 100%; }
    .dim text { font: italic bold 10px "Liberation Sans", sans-serif; fill: #fff; }
    .axis text { font: 300 26px "Open Sans", "Noto Sans", sans-serif; }
    .ghost { font: 56px "Noto Sans CJK SC", sans-serif; stroke: #fff; stroke-opacity: .09; stroke-width: 2px; fill: #202631; fill-opacity: .3; }
    .compass text { font: 19px "Noto Sans CJK SC", sans-serif; }
    .facetext text { font: 20px "Noto Serif CJK SC", "Noto Sans CJK SC", sans-serif; }
    .vplabel { position: absolute; left: 1px; top: 6px; font-size: 19px; }
    .cube { position: absolute; right: 15px; top: 36px; }
    .wcs { position: absolute; right: 44px; top: 161px; width: 70px; height: 26px; border-radius: 5px; background: #898e99; border: 1px solid #b0b4bd; color: #474c56; font: 15px "Liberation Sans", sans-serif; gap: 8px; }
    .nav { position: absolute; right: 4px; top: 220px; width: 46px; height: 311px; border-radius: 3px; background: #565b61; border: 1px solid #686d73; padding: 21px 4px 0; }
    .nav button { width: 36px; stroke: #3c4249; stroke-width: 1.5px; }
    .nav .big { height: 38px; } .nav .dn { height: 17px; }
    .nav .gap { height: 9px; }
    .nav .knob { position: absolute; right: 3px; width: 12px; height: 12px; border-radius: 6px; background: #474c52; }
    .nav .k1 { top: 1px; } .nav .k2 { bottom: 2px; }
    .strip { flex: 0 0 14px; background: linear-gradient(90deg, #b7cdef 9px, #7fd0f5 9px, #7fd0f5 10px, #111 10px, #111 11px, #5a5550 11px); }
    .cmdarea { position: absolute; left: 383px; right: 370px; bottom: 1px; }
    .history { padding-left: 92px; display: flex; flex-direction: column; align-items: flex-start; gap: 7px; margin-bottom: 4px; font-size: 20px; }
    .history span { background: #666769; line-height: 24px; height: 24px; border-radius: 3px; padding-left: 3px; white-space: nowrap; }
    .history .fade { color: #c6c6c6; background: #54565b; }
    .cmd { display: flex; height: 38px; border: 2px solid #5b5b5b; border-radius: 5px 5px 0 0; background: #bcbdbf; }
    .cmd .tools { flex: 0 0 80px; background: linear-gradient(#5b5c5e, #3a3b3d); display: flex; align-items: center; gap: 12px; padding-left: 8px; }
    .cmd .prompt { margin: 0 12px 0 7px; gap: 5px; }
    .cmd input { flex: 1; font-size: 20px; outline: 0; color: #444; }
    .cmd input::placeholder { color: #7a7a7a; font-style: italic; opacity: 1; }
    .cmd .up { align-self: flex-start; margin: 13px 5px 0 0; }

    .ime { position: absolute; right: 183px; bottom: -19px; height: 37px; width: 288px; background: #fff; display: flex; align-items: center; padding-left: 22px; z-index: 3; }
    .ime .logo { position: absolute; left: -24px; top: -4px; }
    .ime button { width: 33px; height: 36px; }
    .ime-char { color: #1a6fc9; font-size: 21px; }
    .lv { font: bold 13px "Liberation Sans", sans-serif; fill: #fff; stroke: #9298a4; stroke-width: 2px; paint-order: stroke; }
    .meter { position: absolute; right: 0; bottom: -59px; width: 14px; height: 88px; background: #2b3242; border-radius: 4px; z-index: 3; padding: 10px 2px 0 5px; }
    .meter i { display: block; height: 70px; background: repeating-linear-gradient(transparent 0 2px, #2b3242 2px 4px), linear-gradient(#3f4a5c 0 29px, #b8b84e 30px, #4fb35c 50px, #3fb0a0); }

    .layouts { display: flex; height: 30px; padding: 0 0 3px 16px; border-top: 1px solid #5b5b5b; background: #383838; }
    .layouts button { width: 82px; margin-right: -1px; background: linear-gradient(#454545, #5a5a5a); color: #a9a9a9; clip-path: polygon(0 0, 5px 8%, 14px 85%, 18px 100%, calc(100% - 14px) 100%, calc(100% - 9px) 85%, 100% 0); }
    .layouts .on { width: 71px; font-weight: bold; color: #fff; background: linear-gradient(#444, #7b7b7b); }
    .layouts .plus { width: 34px; margin-left: 7px; clip-path: polygon(10px 0, 100% 0, 26px 90%, 20px 95%, 0 95%, 4px 40%); }
    .status { display: flex; height: 39px; gap: 2px; padding-left: 19px; background: #474747; }
    .sg { display: flex; background: #4e4e4e; border-top: 3px solid #707070; box-shadow: 1px 0 #858585, -1px 0 #858585; padding-top: 2px; }
    .sg > * { flex: none; height: 34px; }
    .sg .on { background: #5b8ec4; border: 1px solid #43699a; border-width: 0 1px; }
    .sg .sep { border-left: 1px solid #858585; }
    .w20 { width: 20px; } .w22 { width: 22px; } .w24 { width: 24px; } .w34 { width: 34px; }
    .w36 { width: 36px; } .w37 { width: 37px; } .w38 { width: 38px; } .w39 { width: 39px; } .w40 { width: 40px; } .w42 { width: 42px; }
    .w88 { width: 88px; font-size: 17px; } .w108 { width: 108px; }
    .coords { width: 274px; justify-content: flex-end; display: flex; align-items: center; padding-right: 8px; font-size: 17px; }
    .mdl { width: 46px; justify-content: center; font-size: 17px; font-weight: 500; }
    .unit { display: flex; align-items: center; padding: 0 6px; }
    .unit select { flex: 1; appearance: none; font-size: 17px; }
    .unit svg { margin-left: -12px; pointer-events: none; }
  `;

  private tool(k: string, label = k): TemplateResult {
    return k === "v" ? html`<button aria-label="展开">${caret()}</button>` : html`<button aria-label=${label}>${i24(small[k])}</button>`;
  }
  private grid(keys: string, cls = "") {
    return html`<div class="grid ${cls}">${keys.split(" ").map(k => this.tool(k))}</div>`;
  }
  private foot(name: string, more = false, la = false) {
    return html`<div class=${classMap({ foot: true, more: la })}><span>${name}</span>${more ? caret(11, 6) : nothing}${la ? html`<button class="la" aria-label="${name}设置">${launcher}</button>` : nothing}</div>`;
  }
  private cell(c: Cell) {
    const cls = classMap({ [`w${c.w}`]: true, on: !!c.on, sep: !!c.sep });
    if (c.body === "select") return html`<div class="unit w108"><select aria-label="单位"><option>小数</option></select>${caret(11, 7)}</div>`;
    if (c.caret) return html`<button class=${cls} aria-label=${c.label}>${caret(11, 7)}</button>`;
    return html`<button class=${cls} aria-label=${c.label}>${typeof c.body === "string" ? c.body : i28(c.body as SVGTemplateResult)}</button>`;
  }

  private header() {
    return html`<header class="header">
      <button class="appbtn" aria-label="应用程序菜单">
        ${draw(38, 40, svg`<path d="M12 0H25L38 39H29L25 28L10 33L8 39H2Z" fill="#d3302a"/><path d="M12 0H18L8 39H2Z" fill="#e2453c"/><path d="M25 0L38 39H31L19 4Z" fill="#b5241f"/><path d="M19 11L14 24L23 21Z" fill="#9a9a9a"/><path d="M20 8L22 21L26 24Z" fill="#8e1b18"/><path d="M10 28L24 22L27 28L9 34Z" fill="#e8574d"/><path d="M3 33H10L8 39H2ZM29 33L36 32L38 39H30Z" fill="#a8423c"/>`)}
        ${draw(11, 7, svg`<path d="M0 0H11L5.500 7Z" fill="#333"/>`)}
      </button>
      <div class="hright">
        <div class="titlebar">
          <div class="qat">
            ${qat.map(q => html`<button class="tool" aria-label="快速访问">${i24(q)}</button>`)}
            <button class="tool" aria-label="放弃">${i24(undo("#fff"))}</button><button class="mini" aria-label="放弃列表">${caret()}</button>
            <button class="tool" aria-label="重做">${i24(undo("#a3a3a3", true))}</button><button class="mini" aria-label="重做列表">${draw(8, 5, svg`<path d="M0 0H8L4 5Z" fill="#ccc"/>`)}</button>
            <button class="mini last" aria-label="自定义">${draw(13, 11, svg`<path d="M0 1H13" stroke="#fff" stroke-width="2"/><path d="M1 5H12L6.500 11Z" fill="#fff"/>`)}</button>
          </div>
          <div class="title"><span>Autodesk AutoCAD 2019</span><span>7.3拉伸命令与布尔运算.dwg</span></div>
          <input class="search" aria-label="搜索" placeholder="键入关键字或短语" />
          <div class="account">
            <button aria-label="搜索">${i24(svg`<path d="M3 1H9V6L11 12V22H1V12L3 6ZM15 1H21V6L23 12V22H13V12L15 6Z" fill="#dcdcdc" stroke="#222" stroke-width="1.500"/><path d="M9 8H15V14H9Z" fill="#333"/><path d="M4 3V20M18 3V20" stroke="#fff" stroke-width="2"/><path d="M8 6V20M21 8V20" stroke="#444" stroke-width="2"/>`)}</button>
            <button class="login">${draw(24, 24, svg`<path d="M1 22Q1 17 8 15Q5 11 6 5Q8 0 12 0Q17 0 18 5Q19 11 16 15Q23 17 23 22Z" fill="#f6f6f6" stroke="#222" stroke-width="1.200"/>`)}<span>登录</span></button>
            <button aria-label="登录列表" class="first">${caret(7, 5)}</button>
            <button aria-label="应用商店">${i24(svg`<path d="M0 2H5L9 16H20L23 6H6" stroke="#23265c" stroke-width="3.500"/><path d="M0 2H5L9 16H20L23 6H6" stroke="#eef" stroke-width="1.300"/><path d="M8 9H22M9 12H21" stroke="#eef"/><circle cx="10" cy="21" r="2" fill="#eef" stroke="#23265c"/><circle cx="19" cy="21" r="2" fill="#eef" stroke="#23265c"/>`)}</button>
            <button aria-label="Autodesk">${i24(svg`<path d="M12 4L5 18H19Z" stroke="#23265c" stroke-width="6" stroke-linejoin="round"/><circle cx="4" cy="19" r="3.500" fill="#eef" stroke="#23265c"/><circle cx="20" cy="19" r="3.500" fill="#eef" stroke="#23265c"/><circle cx="12" cy="4" r="3.500" fill="#eef" stroke="#23265c"/><path d="M12 4L5 18H19Z" stroke="#eef" stroke-width="3" stroke-linejoin="round"/>`)}</button>
            <button aria-label="帮助">${caret(7, 5)}</button>
            <span class="rule"></span>
            <button aria-label="更多">${draw(12, 10, svg`<path d="M0 0L6 5L0 10ZM6 0L12 5L6 10Z" fill="#111"/>`)}</button>
          </div>
          <div class="winctl">
            <button aria-label="最小化">${draw(15, 15, svg`<path d="M0 8H15" stroke="#888"/>`)}</button>
            <button aria-label="还原">${draw(16, 16, svg`<path d="M1 4H11V15H1ZM4 4V1H14V12H11" stroke="#888"/>`)}</button>
            <button aria-label="关闭">${draw(16, 16, svg`<path d="M1 1L15 15M15 1L1 15" stroke="#888"/>`)}</button>
          </div>
          <div class="notice">育设学堂版权所有, 翻录必究. 录制老师:周老师</div>
        </div>
        <nav class="menubar">
          ${menus.map(m => html`<a href="#">${m}</a>`)}<span class="sp"></span>
          <div class="mdi">
            <button aria-label="最小化图形">${draw(15, 15, svg`<path d="M0 12H14" stroke="#222" stroke-width="3"/>`)}</button>
            <button aria-label="还原图形">${draw(18, 16, svg`<path d="M1 6H11V15H1ZM6 6V1H17V10H12" stroke="#222" stroke-width="2"/>`)}</button>
            <button aria-label="关闭图形">${draw(14, 14, svg`<path d="M2 1L12 13M12 1L2 13" stroke="#222" stroke-width="3"/>`)}</button>
          </div>
        </nav>
      </div>
    </header>`;
  }

  private ribbon() {
    const bigBtn = (icon: string, lines: string[], cls = "", more = false) => html`
      <button class="bigbtn ${cls}">${i48(big[icon])}${lines.map(l => html`<span>${l}</span>`)}${more ? html`<span class="c">${caret()}</span>` : nothing}</button>`;
    return html`<section class="ribbon">
      <div class="panel p-model"><div class="body">${bigBtn("box", ["长方体"], "", true)}${bigBtn("extrude", ["拉伸"], "", true)}${this.grid("polysolid presspull")}</div>${this.foot("建模", true)}</div>
      <div class="panel p-mesh"><div class="body">${bigBtn("egg", ["平滑", "对象"])}${this.grid("eggplus eggminus eggline")}</div>${this.foot("网格", false, true)}</div>
      <div class="panel p-solid"><div class="body">${this.grid("union intersectRed wirebox v subtract slice thicken v intersect fillet separate v")}</div>${this.foot("实体编辑", true)}</div>
      <div class="panel p-draw"><div class="body">${this.grid("pline spiral arc v spline line circle v polygon rect ellipse v")}</div>${this.foot("绘图", true)}</div>
      <div class="panel p-mod"><div class="body">${this.grid("mirror gizmo move copy trim v align3d rotate3d rotate stretch filletLine v erase scale3d scale offset array v")}</div>${this.foot("修改", true)}</div>
      <div class="panel p-sec"><div class="body">${bigBtn("section", ["截面", "平面"])}</div>${this.foot("截面", true, true)}</div>
      <div class="panel p-ucs"><div class="body">
        ${this.grid("ucsBulb v ucsX v ucsFace v", "g1")}
        <div class="right">${this.grid("ucsNamed ucsOrigin ucsView ucsWorld ucsPrev ucsZaxis ucsZ ucs3", "g2")}
          <div class="combo">${i24(small.ucsWorld)}<select aria-label="坐标系"><option>世界</option></select>${caret(11, 7)}</div>
        </div></div>${this.foot("坐标", false, true)}</div>
      <div class="panel p-view"><div class="body">
        <div class="combo">${i24(small.concept)}<select aria-label="视觉样式"><option>概念</option></select>${caret(11, 7)}</div>
        <div class="combo hot">${viewIcon("sw")}<select aria-label="视图"><option>西南等轴测</option></select>${caret(11, 7)}
          <div class="drop">
            <div class="list">
              <ul>${views.map(([n, k]) => html`<li><button class=${classMap({ hover: k === "right", sel: k === "sw" })}>${viewIcon(k)}<span>${n}</span></button></li>`)}</ul>
              <div class="bar"></div>
            </div>
            <button class="manager">视图管理器...</button>
            <div class="grip">${draw(9, 8, svg`<path d="M6 1H8V2H6ZM3 4H5V5H3ZM6 4H8V5H6ZM0 7H2V8H0ZM3 7H5V8H3ZM6 7H8V8H6Z" fill="#999"/>`)}</div>
            <span class="pointer">${draw(18, 27, svg`<path d="M1 1V20L6 16L10 25L14 23L10 15H17Z" fill="#fff" stroke="#444" stroke-width=".6"/>`)}</span>
          </div>
        </div></div>${this.foot("")}</div>
      <div class="panel p-sel"><div class="body">${bigBtn("cull", ["剔除"], "cull")}${bigBtn("nofilter", ["无过滤器"], "nf", true)}
        <button class="bigbtn gz">${i48(big.gizmo)}<span>移动</span><span>小控件</span><span class="side">${caret()}</span></button></div>${this.foot("选择")}</div>
      <div class="panel p-slim"><div class="body">${bigBtn("layers", ["图层"])}</div><div class="foot">${caret(12, 7)}</div></div>
      <div class="panel p-slim"><div class="body"><button class="bigbtn grp">${draw(48, 28, big.group)}<span>组</span></button></div><div class="foot">${caret(12, 7)}</div></div>
      <div class="panel p-base"><div class="body">${bigBtn("base", ["基点"], "", true)}</div>${this.foot("视图", true, true)}</div>
    </section>`;
  }

  render() {
    return html`<div class="page"><main class="window">
      ${this.header()}
      <nav class="tabs">${tabs.map((t, i) => html`<button class=${i === 0 ? "on" : ""}>${t}</button>`)}
        <button class="mini" aria-label="最小化功能区">${draw(20, 13, svg`<rect width="20" height="13" rx="3" fill="#f4f4f4"/><path d="M6 9L10 4L14 9Z" fill="#444"/>`)}${caret()}</button></nav>
      ${this.ribbon()}
      <nav class="docs">
        <button class="doc d0">开始</button>
        <button class="doc d1"><span>7.3拉伸命令与布尔运算*</span>${draw(11, 11, svg`<path d="M1 1L10 10M10 1L1 10" stroke="#444" stroke-width="3"/>`)}</button>
        <button class="add" aria-label="新图形">${draw(13, 13, svg`<path d="M6.500 0V13M0 6.500H13" stroke="#c9c9c9" stroke-width="3"/>`)}</button>
      </nav>
      <div class="edge"></div>
      <section class="stage">
        <div class="view">
          ${scene}
          <div class="vplabel">[−][西南等轴测][概念]</div>
          <div class="cube">${viewCube}</div>
          <button class="wcs">WCS ${draw(12, 7, svg`<path d="M1 1H11L6 6Z" stroke="#c4c7cf"/>`)}</button>
          <div class="nav">
            <span class="knob k1"></span>
            ${navIcons.map(([n, b, d]) => html`<button class="big" aria-label=${n}>${draw(36, 34, b)}</button>
              ${d ? html`<button class="dn" aria-label="${n}选项">${draw(8, 5, svg`<path d="M0 0H8L4 5Z" fill="#3c4249" stroke="none"/>`)}</button>` : html`<div class="gap"></div>`}`)}
            <span class="knob k2"></span>
          </div>
          <div class="cmdarea">
            <div class="history"><span class="fade">命令:&nbsp;</span><span>命令:&nbsp;</span><span>增强型三维性能不适用于当前视觉样式。</span></div>
            <div class="cmd">
              <div class="tools">${draw(3, 26, svg`<path d="M1.500 0V26" stroke="#999" stroke-width="2" stroke-dasharray="2 3"/>`)}
                <button aria-label="关闭">${draw(14, 14, svg`<path d="M1 1L13 13M13 1L1 13" stroke="#e0e0e0" stroke-width="3"/>`)}</button>
                <button aria-label="自定义">${draw(22, 22, svg`<path d="M4 1L8 5L6 8L1 5Q0 10 5 12L9 12L18 21L21 18L12 9Q12 1 4 1Z" fill="#d4d4d4"/>`)}</button></div>
              <button class="prompt" aria-label="最近命令">${draw(22, 21, svg`<rect x=".5" y=".5" width="21" height="20" rx="2" fill="#9ea1ac" stroke="#777c88"/><path d="M4 6L9 10.500L4 15M11 16H18" stroke="#444a58" stroke-width="2"/>`)}${draw(9, 5, svg`<path d="M0 0H9L4.500 5Z" fill="#555"/>`)}</button>
              <input aria-label="命令" placeholder="键入命令" />
              <span class="up">${draw(10, 7, svg`<path d="M5 0L10 7H0Z" fill="#111"/>`)}</span>
            </div>
          </div>
        </div>
        <div class="strip"></div>
        <div class="meter"><i></i></div>
        <div class="ime">
          <span class="logo">${draw(46, 44, svg`<g transform="rotate(-8 23 22)"><rect x="4" y="3" width="38" height="38" rx="6" fill="#f4622a"/><path d="M34 13Q20 7 15 13Q13 20 23 21Q33 23 30 29Q25 35 11 30" stroke="#fff" stroke-width="7"/></g>`)}</span>
          ${imeIcons.map(([n, b]) => html`<button aria-label=${n}>${b}</button>`)}
        </div>
      </section>
      <nav class="layouts"><button class="on">模型</button><button>布局1</button><button>布局2</button>
        <button class="plus" aria-label="新布局">${draw(13, 13, svg`<path d="M6.500 0V13M0 6.500H13" stroke="#c9c9c9" stroke-width="3"/>`)}</button></nav>
      <footer class="status">
        <div class="sg"><span class="coords">1289.9486, 305.9089, 0.0000</span></div>
        <div class="sg"><button class="mdl">模型</button></div>
        ${groups.map(g => html`<div class="sg">${g.map(c => this.cell(c))}</div>`)}
      </footer>
    </main></div>`;
  }
}
